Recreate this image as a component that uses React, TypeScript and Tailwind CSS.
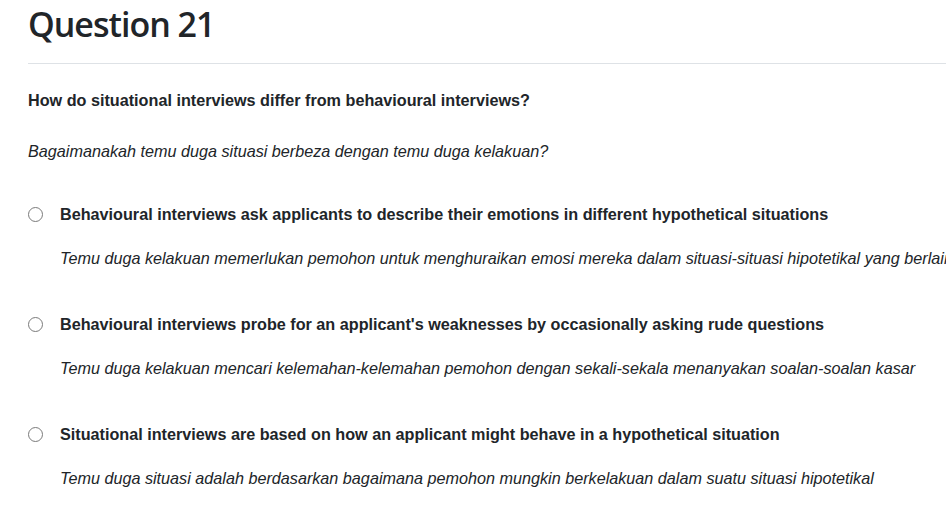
import React from "react";

const options = [
  {
    en: "Behavioural interviews ask applicants to describe their emotions in different hypothetical situations",
    ms: "Temu duga kelakuan memerlukan pemohon untuk menghuraikan emosi mereka dalam situasi-situasi hipotetikal yang berlainan",
  },
  {
    en: "Behavioural interviews probe for an applicant's weaknesses by occasionally asking rude questions",
    ms: "Temu duga kelakuan mencari kelemahan-kelemahan pemohon dengan sekali-sekala menanyakan soalan-soalan kasar",
  },
  {
    en: "Situational interviews are based on how an applicant might behave in a hypothetical situation",
    ms: "Temu duga situasi adalah berdasarkan bagaimana pemohon mungkin berkelakuan dalam suatu situasi hipotetikal",
  },
];

export default function App() {
  return (
    <div className="w-[946px] h-[506px] overflow-hidden bg-white pl-7 text-[#212529] font-['Liberation_Sans',Arial,sans-serif]">
      {/* Heading */}
      <h1 className="h-[48px] pt-[1px] text-[34px] leading-[46px] font-semibold font-['Open_Sans',sans-serif] tracking-[-1px]">
        Question 21
      </h1>
      <div className="mt-[15px] border-t border-[#dee2e6]" />

      {/* Question */}
      <p className="mt-[26px] text-[16.2px] leading-[20px] font-bold">
        How do situational interviews differ from behavioural interviews?
      </p>
      <p className="mt-[31px] text-[16.2px] leading-[20px] italic">
        Bagaimanakah temu duga situasi berbeza dengan temu duga kelakuan?
      </p>

      {/* Options */}
      <div className="mt-[43px] flex flex-col gap-[46px]">
        {options.map((o, i) => (
          <label key={i} className="flex items-start whitespace-nowrap">
            <span className="mt-[3px] w-[15px] h-[15px] shrink-0 rounded-full border-[1.5px] border-[#7a7a7a] bg-white" />
            <span className="ml-[17px] flex flex-col">
              <span className="text-[16.2px] leading-[20px] font-bold">{o.en}</span>
              <span className="mt-[24px] text-[16.2px] leading-[20px] italic">{o.ms}</span>
            </span>
          </label>
        ))}
      </div>
    </div>
  );
}
